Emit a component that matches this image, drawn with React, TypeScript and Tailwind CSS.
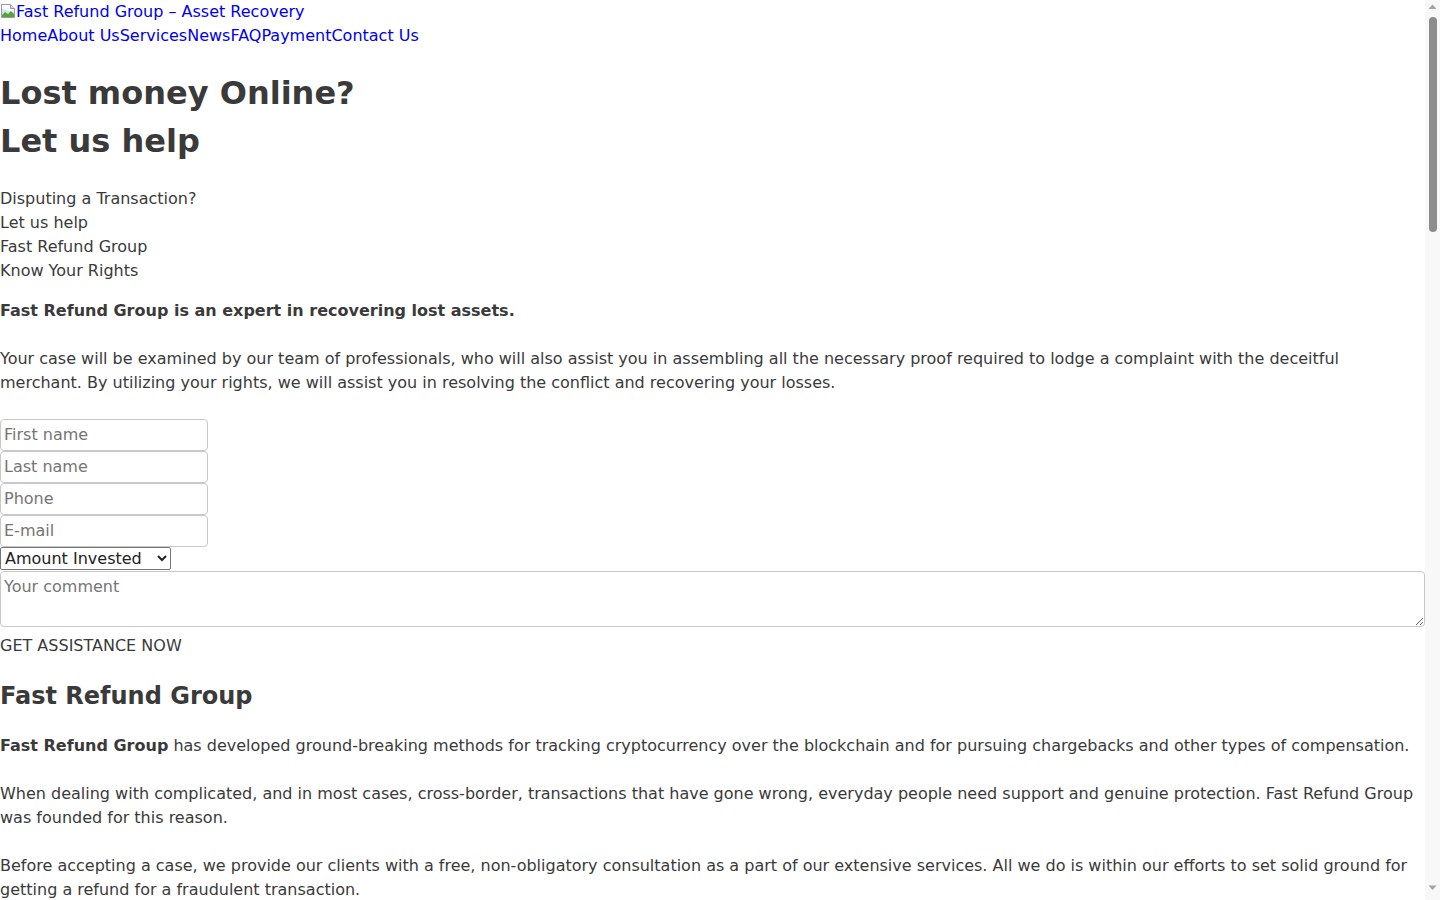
import React from 'react';

const NAV = ['Home', 'About Us', 'Services', 'News', 'FAQ', 'Payment', 'Contact Us'];

function BrokenImage() {
  return (
    <svg width="16" height="16" viewBox="0 0 16 16" className="inline-block align-[-2px]">
      <path d="M1.5 1.5h9l4 4v9h-13z" fill="#fff" stroke="#9a9a9a" />
      <path d="M10.5 1.5v4h4" fill="#e8e8e8" stroke="#9a9a9a" />
      <path d="M2 6h8v-0.5 M2 6v8h12V9" fill="#cfe3f5" />
      <path d="M2 12l3-3 3 2 3-3 3 3v3H2z" fill="#5aa33a" />
    </svg>
  );
}

// browser scrollbar as seen in the screenshot
function Scrollbar() {
  return (
    <div className="fixed right-0 top-0 flex h-screen w-[15px] flex-col items-center bg-[#f8f8f8]">
      <svg width="9" height="6" viewBox="0 0 9 6" className="mt-[4px]">
        <path d="M4.5 0.5L8.5 5H0.5z" fill="#a3a3a3" />
      </svg>
      <div className="mt-[7px] h-[215px] w-[8px] rounded-full bg-[#8d8d8d]" />
      <svg width="9" height="6" viewBox="0 0 9 6" className="mt-auto mb-[9px]">
        <path d="M0.5 0.5h8L4.5 5z" fill="#a3a3a3" />
      </svg>
    </div>
  );
}

const inputCls =
  'block w-[208px] h-[32px] rounded-[4px] border border-[#c8c8c8] px-[3px] pb-[1px] text-[16px] text-[#3a3a3a] placeholder:text-[#757575] outline-none';

const h2Cls = 'my-[0.83em] text-[24px] leading-[36px] font-bold';

export default function App() {
  return (
    <div className="bg-white pr-[15px] text-[16px] leading-[24px] text-[#3a3a3a] font-['DejaVu_Sans','Liberation_Sans',sans-serif]">
      <header>
        <a href="#" className="text-[#0000ee] leading-[24px]">
          <BrokenImage />
          Fast Refund Group – Asset Recovery
        </a>
        <nav className="flex">
          {NAV.map((n) => (
            <a key={n} href="#" className="text-[#0000ee]">
              {n}
            </a>
          ))}
        </nav>
      </header>

      <main>
        <h1 className="my-[0.67em] text-[32px] leading-[48px] font-bold">
          Lost money Online?
          <br />
          Let us help
        </h1>
        <p>
          Disputing a Transaction?
          <br />
          Let us help
          <br />
          Fast Refund Group
          <br />
          Know Your Rights
        </p>
        <p className="mt-[16px]">
          <strong>Fast Refund Group is an expert in recovering lost assets.</strong>
        </p>
        <p className="mt-[24px]">
          Your case will be examined by our team of professionals, who will also assist you in assembling all the necessary
          proof required to lodge a complaint with the deceitful merchant. By utilizing your rights, we will assist you in
          resolving the conflict and recovering your losses.
        </p>

        <form className="mt-[24px]" onSubmit={(e) => e.preventDefault()}>
          <input className={inputCls} placeholder="First name" />
          <input className={inputCls} placeholder="Last name" />
          <input className={inputCls} placeholder="Phone" />
          <input className={inputCls} placeholder="E-mail" />
          <select className="block h-[23px] w-[171px] rounded-[2px] border border-[#767676] bg-white pl-0 text-[16px] leading-[20px] text-[#222]">
            <option>Amount Invested</option>
            <option>Less than $10,000</option>
            <option>$10,000 – $50,000</option>
            <option>More than $50,000</option>
          </select>
          <textarea
            className="mt-[1px] block h-[56px] w-full rounded-[4px] border border-[#c8c8c8] px-[3px] pt-[3px] text-[16px] leading-[24px] placeholder:text-[#757575] outline-none"
            placeholder="Your comment"
          />
          <button type="submit" className="mt-[7px] block text-[16px] leading-[24px] text-[#3a3a3a]">
            GET ASSISTANCE NOW
          </button>
        </form>

        <h2 className={h2Cls}>Fast Refund Group</h2>
        <p>
          <strong>Fast Refund Group</strong> has developed ground-breaking methods for tracking cryptocurrency over the
          blockchain and for pursuing chargebacks and other types of compensation.
        </p>
        <p className="mt-[24px]">
          When dealing with complicated, and in most cases, cross-border, transactions that have gone wrong, everyday people
          need support and genuine protection. Fast Refund Group was founded for this reason.
        </p>
        <p className="mt-[24px]">
          Before accepting a case, we provide our clients with a free, non-obligatory consultation as a part of our extensive
          services. All we do is within our efforts to set solid ground for getting a refund for a fraudulent transaction.
        </p>

        <h2 className={h2Cls}>Our Services</h2>
        <p>
          <strong>Chargeback Assistance</strong>
          <br />
          We help you build a strong case to dispute unauthorized or fraudulent card transactions with your bank.
        </p>
        <p className="mt-[24px]">
          <strong>Crypto Tracing</strong>
          <br />
          Our analysts follow the movement of funds across wallets and exchanges to identify where your assets ended up.
        </p>
        <p className="mt-[24px]">
          <strong>Wire Transfer Recall</strong>
          <br />
          We guide you through the process of requesting a recall of international bank transfers.
        </p>
        <p className="mt-[24px]">
          <strong>Consultation</strong>
          <br />
          A free, non-obligatory review of your situation by our team of specialists.
        </p>

        <h2 className={h2Cls}>How it works</h2>
        <p>
          1. Contact us and tell us about your case.
          <br />
          2. Receive a free consultation.
          <br />
          3. We collect and prepare the evidence.
          <br />
          4. We submit the claim and follow it up until it is resolved.
        </p>

        <h2 className={h2Cls}>Why choose us</h2>
        <p>
          Our team combines experience in banking, law and digital forensics. We understand how scams operate and how
          financial institutions handle disputes, which allows us to act quickly and precisely.
        </p>
        <p className="mt-[24px]">
          Every case is handled confidentially and with respect. We keep you informed at each stage of the process.
        </p>

        <h2 className={h2Cls}>Frequently Asked Questions</h2>
        <p>
          <strong>How long does the process take?</strong>
          <br />
          The duration depends on the complexity of the case, the institutions involved and the amount of evidence available.
        </p>
        <p className="mt-[24px]">
          <strong>Is the consultation really free?</strong>
          <br />
          Yes. The initial consultation is free and comes with no obligation.
        </p>
        <p className="mt-[24px]">
          <strong>What information do I need?</strong>
          <br />
          Any receipts, bank statements, emails, chat logs or wallet addresses related to the transaction.
        </p>
        <p className="mt-[24px]">
          <strong>Can you help with cryptocurrency losses?</strong>
          <br />
          Yes. We trace transactions on the blockchain and work with exchanges where possible.
        </p>

        <h2 className={h2Cls}>News</h2>
        <p>
          <a href="#" className="text-[#0000ee]">How to recognise an investment scam</a>
          <br />
          <a href="#" className="text-[#0000ee]">What is a chargeback and how does it work?</a>
          <br />
          <a href="#" className="text-[#0000ee]">Protecting your crypto wallet</a>
          <br />
          <a href="#" className="text-[#0000ee]">Warning signs of fake trading platforms</a>
        </p>

        <h2 className={h2Cls}>Testimonials</h2>
        <p>
          “Fast Refund Group helped me get back the money I lost to a fake broker. Professional and patient.”
          <br />— M. K.
        </p>
        <p className="mt-[24px]">
          “I did not know where to start. They explained every step and handled the dispute with my bank.”
          <br />— J. R.
        </p>
        <p className="mt-[24px]">
          “Quick response and clear communication from the first call.”
          <br />— A. S.
        </p>

        <h2 className={h2Cls}>Contact Us</h2>
        <p>
          Email: info@fastrefundgroup.com
          <br />
          Working hours: Monday – Friday, 9:00 – 18:00
        </p>
        <p className="mt-[24px]">
          <a href="#" className="text-[#0000ee]">Privacy Policy</a>
          <br />
          <a href="#" className="text-[#0000ee]">Terms and Conditions</a>
          <br />
          <a href="#" className="text-[#0000ee]">Cookie Policy</a>
        </p>
      </main>

      <footer className="mt-[24px] pb-[24px]">
        <p>© Fast Refund Group. All rights reserved.</p>
      </footer>

      <Scrollbar />
    </div>
  );
}
